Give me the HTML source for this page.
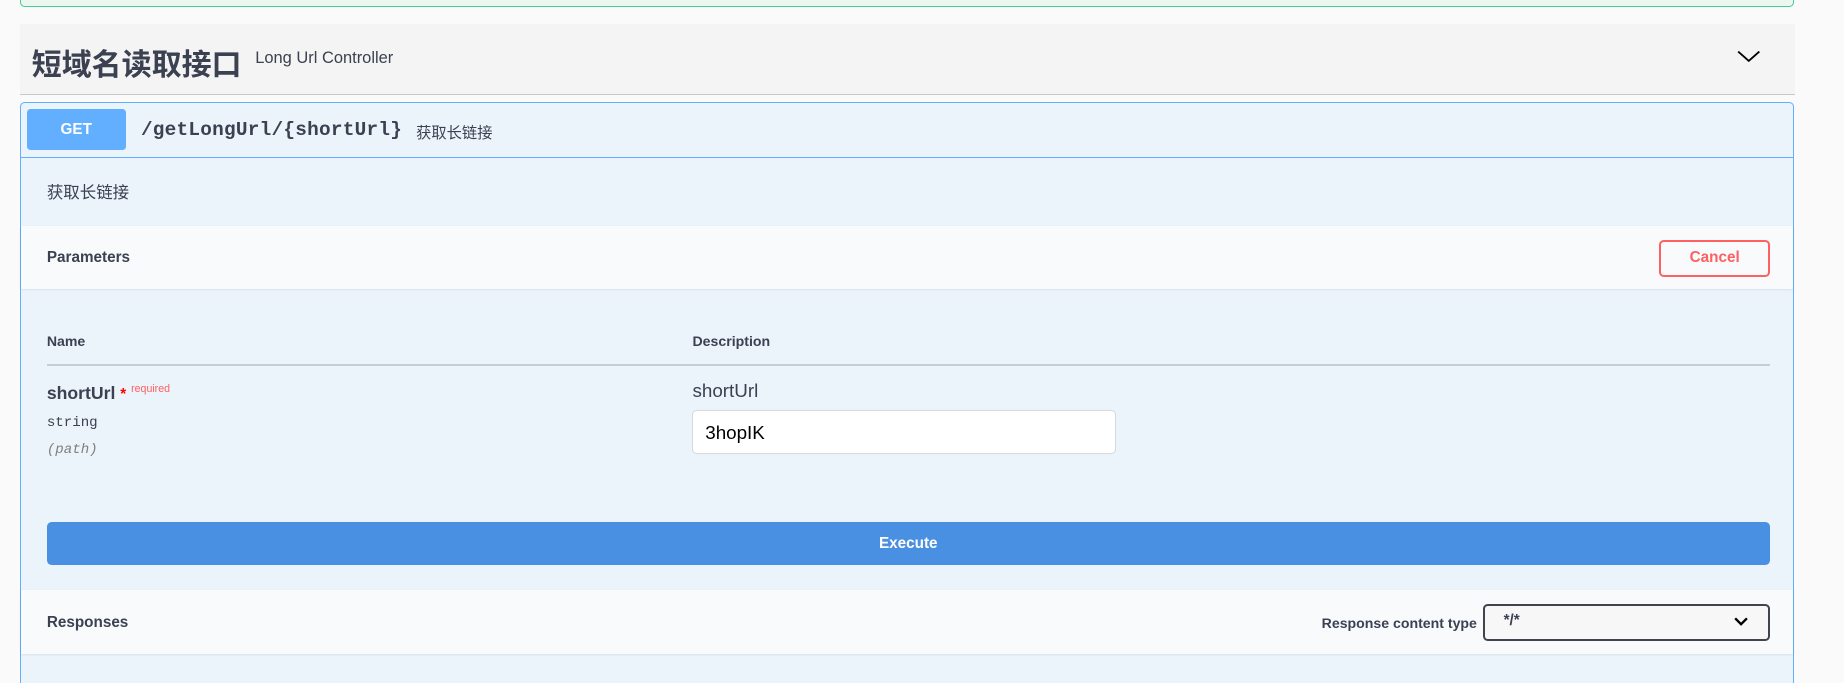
<!DOCTYPE html>
<html><head><meta charset="utf-8">
<style>
html{zoom:1.17602;overflow:hidden;height:581px}
body{margin:0;width:1568px;height:581px;overflow:hidden;background:#fafafa;font-family:"Liberation Sans","Noto Sans CJK SC",sans-serif;color:#3b4151;position:relative}
.abs{position:absolute}
.green{left:17px;top:-10px;width:1507px;height:14px;border:1px solid #49cc90;border-radius:4px;background:#edf7f2}
.tag{left:17px;top:20px;width:1509px;height:60px;background:#f4f4f4;border-bottom:1px solid #c8c8c8}
.tag h3{position:absolute;left:10px;top:14px;margin:0;font-size:25.5px;font-weight:bold;color:#3b4151;font-family:"Liberation Sans","Noto Sans CJK SC",sans-serif}
.tag small{position:absolute;left:200px;top:22px;font-size:14px;color:#3b4151}
.op{left:17px;top:87px;width:1507px;height:500px;border:1px solid #61affe;border-bottom:none;border-radius:4px 4px 0 0;background:#ebf3fb}
.sum{left:0;top:0;width:1507px;height:46px;border-bottom:1px solid #61affe}
.get{left:5px;top:5px;width:84px;height:35px;background:#61affe;border-radius:3px;color:#fff;font-weight:bold;font-size:13px;text-align:center;line-height:35px}
.path{left:102px;top:13px;font-family:"Liberation Mono",monospace;font-size:16.5px;font-weight:bold;color:#3b4151;letter-spacing:0.2px}
.psum{left:336px;top:15px;font-size:13px}
.desc{left:22px;top:64px;font-size:14px}
.bar{left:0;width:1507px;height:54px;background:#f8fafc;box-shadow:0 1px 2px rgba(0,0,0,.1)}
.bar b{position:absolute;left:22px;top:20px;font-size:13px}
.cancel{left:1393px;top:12px;width:91px;height:28px;border:2px solid #ff6060;border-radius:4px;color:#ff6060;font-weight:bold;font-size:13px;text-align:center;line-height:28px}
.th{top:195px;font-size:12px;font-weight:bold}
.line{left:22px;top:222px;width:1465px;height:1px;background:#c5cdd6}
.exec{left:22px;top:356px;width:1465px;height:37px;background:#4990e2;border-radius:4px;color:#fff;font-weight:bold;font-size:13px;text-align:center;line-height:37px}
.inp{left:571px;top:261px;width:360px;height:37px;border:1px solid #d9d9d9;border-radius:4px;background:#fff;font-size:16px;line-height:37px;padding-left:10px;box-sizing:border-box;color:#000}
.sel{left:1243px;top:12px;width:244px;height:31px;border:2px solid #41444e;border-radius:4px;background:#f7f7f7;box-sizing:border-box;font-size:13px;font-weight:bold;padding-left:16px;line-height:26px}
</style></head><body>
<div class="abs green"></div>
<div class="abs tag"><h3>短域名读取接口</h3><small>Long Url Controller</small>
<svg class="abs" style="left:1460px;top:21px" width="20" height="14" viewBox="0 0 20 14"><path d="M1 3 L10 11 L19 3" fill="none" stroke="#000" stroke-width="1.6"/></svg></div>
<div class="abs op">
 <div class="abs sum"><div class="abs get">GET</div><div class="abs path">/getLongUrl/{shortUrl}</div><div class="abs psum">获取长链接</div></div>
 <div class="abs desc">获取长链接</div>
 <div class="abs bar" style="top:104px"><b>Parameters</b><div class="abs cancel">Cancel</div></div>
 <div class="abs th" style="left:22px">Name</div>
 <div class="abs th" style="left:571px">Description</div>
 <div class="abs line"></div>
 <div class="abs" style="left:22px;top:238px;font-size:15px;font-weight:bold">shortUrl <span style="color:red;font-size:13px">*</span> <sup style="color:#ff6060;font-size:9px;font-weight:normal">required</sup></div>
 <div class="abs" style="left:22px;top:265px;font-family:'Liberation Mono',monospace;font-size:12px">string</div>
 <div class="abs" style="left:22px;top:288px;font-family:'Liberation Mono',monospace;font-size:12px;font-style:italic;color:#808080">(path)</div>
 <div class="abs" style="left:571px;top:235px;font-size:16px;color:#3b4151">shortUrl</div>
 <div class="abs inp">3hopIK</div>
 <div class="abs exec">Execute</div>
 <div class="abs bar" style="top:414px"><b>Responses</b>
  <div class="abs" style="left:1106px;top:21px;font-size:12px;font-weight:bold">Response content type</div>
  <div class="abs sel">*/*<svg class="abs" style="left:212px;top:8px" width="12" height="9" viewBox="0 0 12 9"><path d="M1 2 L6 7 L11 2" fill="none" stroke="#000" stroke-width="2"/></svg></div>
 </div>
</div>
</body></html>
